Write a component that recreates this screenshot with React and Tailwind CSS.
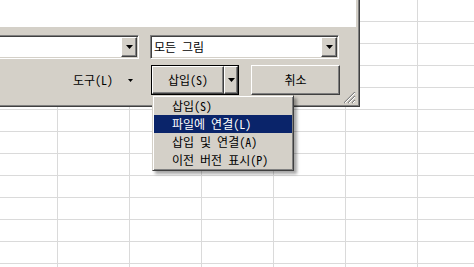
import React from 'react';

const raised =
  'border-t border-l border-t-white border-l-white border-b border-r border-b-[#404040] border-r-[#404040] shadow-[inset_-1px_-1px_0_#808080]';

function DownArrow({ className = '' }) {
  return (
    <svg width="7" height="4" viewBox="0 0 7 4" className={className}>
      <path d="M0 0h7L3.5 4z" fill="#000" />
    </svg>
  );
}

function SmallArrow() {
  return (
    <svg width="5" height="3" viewBox="0 0 5 3">
      <path d="M0 0h5L2.5 3z" fill="#000" />
    </svg>
  );
}

function ComboBox({ width, text, className = '' }) {
  return (
    <div
      className={`h-[24px] flex bg-white border border-t-[#808080] border-l-[#808080] border-b-white border-r-white p-[1px] shadow-[inset_1px_1px_0_#404040,inset_-1px_-1px_0_#d4d0c8] ${className}`}
      style={{ width }}
    >
      <div className="flex-1 flex items-center pl-[2px] text-[12px] leading-none">{text}</div>
      <div className={`w-[16px] h-full bg-[#d4d0c8] flex items-center justify-center ${raised}`}>
        <DownArrow />
      </div>
    </div>
  );
}

function Grip() {
  return (
    <svg width="12" height="12" viewBox="0 0 12 12">
      <path d="M11 0L0 11M11 4L4 11M11 8L8 11" stroke="#808080" strokeWidth="1.2" />
      <path d="M11 1L1 11M11 5L5 11M11 9L9 11" stroke="#ffffff" strokeWidth="1" />
    </svg>
  );
}

const menuItems = [
  { label: '삽입(S)' },
  { label: '파일에 연결(L)', active: true },
  { label: '삽입 및 연결(A)' },
  { label: '이전 버전 표시(P)' },
];

export default function App() {
  const cells = [];
  for (let r = 0; r < 13; r++) {
    for (let c = 0; c < 7; c++) {
      cells.push(<div key={`${r}-${c}`} className="border-r border-b border-[#dadada]" />);
    }
  }

  return (
    <div className="relative w-[474px] h-[267px] overflow-hidden bg-white font-['Noto_Sans_Mono_CJK_KR','Noto_Sans_CJK_KR',sans-serif] text-black">
      {/* spreadsheet behind */}
      <div className="grid grid-cols-[58px_repeat(6,72px)] grid-rows-[repeat(13,22px)]">{cells}</div>

      {/* dialog */}
      <div className="absolute left-0 top-0 w-[360px] h-[107px] bg-[#d4d0c8] border-r border-b border-[#404040] shadow-[inset_-1px_-1px_0_#808080] flex flex-col">
        <div className="h-[27px] w-[356px] bg-white" />

        <div className="flex mt-[8px]">
          <ComboBox width={143} text="" className="ml-[-4px]" />
          <ComboBox width={189} text="모든 그림" className="ml-[11px]" />
        </div>

        <div className="flex items-center mt-[6px] h-[30px]">
          <div className="w-[151px] flex items-center pl-[73px] text-[12px] leading-none">
            <span>도구(L)</span>
            <span className="ml-[15px] flex">
              <SmallArrow />
            </span>
          </div>

          <div className="w-[88px] h-[30px] border border-black flex">
            <div className={`w-[72px] h-full flex items-center justify-center text-[12px] leading-none ${raised}`}>
              삽입(S)
            </div>
            <div className={`flex-1 h-full flex items-center justify-center ${raised}`}>
              <DownArrow />
            </div>
          </div>

          <div className={`ml-[12px] w-[89px] h-[30px] flex items-center justify-center text-[12px] leading-none ${raised}`}>
            취소
          </div>
        </div>

        <div className="absolute right-[3px] bottom-[2px] flex">
          <Grip />
        </div>
      </div>

      {/* dropdown menu */}
      <div className="absolute left-[152px] top-[95px] w-[142px] bg-[#d4d0c8] border border-t-[#d4d0c8] border-l-[#d4d0c8] border-b-[#404040] border-r-[#404040] p-[1px] shadow-[inset_1px_1px_0_#ffffff,inset_-1px_-1px_0_#808080,3px_3px_3px_rgba(0,0,0,0.35)]">
        {menuItems.map((item) => (
          <div
            key={item.label}
            className={`h-[18px] flex items-center pl-[18px] text-[12px] leading-none ${
              item.active ? 'bg-[#0a246a] text-white' : 'text-black'
            }`}
          >
            {item.label}
          </div>
        ))}
      </div>
    </div>
  );
}
